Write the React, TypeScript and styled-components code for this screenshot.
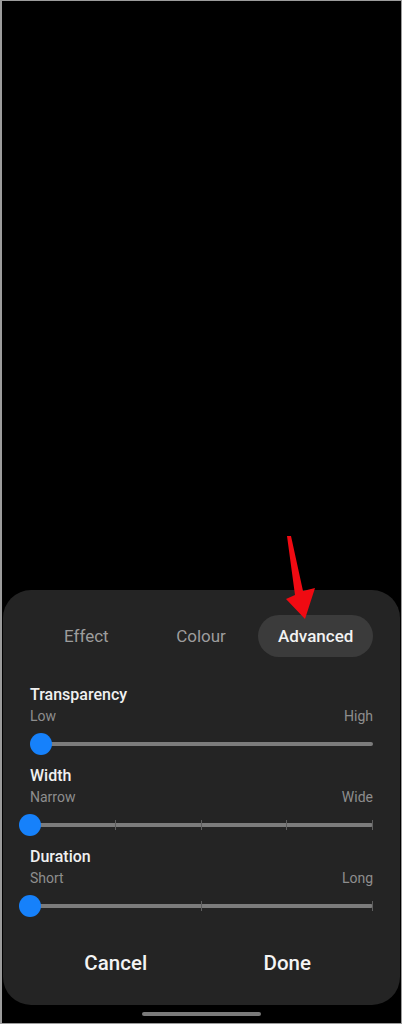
import styled, { createGlobalStyle } from "styled-components";

const GlobalStyle = createGlobalStyle`
  html, body {
    margin: 0;
    padding: 0;
    background: #000;
  }
  * {
    box-sizing: border-box;
  }
`;

const Screen = styled.div`
  position: relative;
  width: 402px;
  height: 1024px;
  background: #000;
  border: 1px solid #9c9c9c;
  border-left-width: 2px;
  display: flex;
  flex-direction: column;
  font-family: Roboto, "Noto Sans", sans-serif;
  overflow: hidden;
`;

const Backdrop = styled.div`
  flex: 1;
`;

const Sheet = styled.div`
  margin: 0 1px 0 1px;
  height: 415px;
  background: #242424;
  border-radius: 28px;
  padding: 25px 27px 18px 27px;
  display: flex;
  flex-direction: column;
`;

const Tabs = styled.div`
  display: grid;
  grid-template-columns: repeat(3, 1fr);
  height: 42px;
  margin-left: -1px;
`;

const Tab = styled.div<{ $active?: boolean }>`
  display: flex;
  align-items: center;
  justify-content: center;
  border-radius: 21px;
  font-size: 17px;
  font-weight: ${(p) => (p.$active ? 500 : 400)};
  color: ${(p) => (p.$active ? "#f2f2f2" : "#9d9d9d")};
  background: ${(p) => (p.$active ? "#3b3b3b" : "transparent")};
`;

const Setting = styled.div<{ $top: number }>`
  margin-top: ${(p) => p.$top}px;
  display: flex;
  flex-direction: column;
`;

const Title = styled.div`
  font-size: 16px;
  line-height: 20px;
  font-weight: 500;
  color: #f0f0f0;
`;

const Range = styled.div`
  display: flex;
  justify-content: space-between;
  margin-top: 2px;
  font-size: 14px;
  line-height: 18px;
  color: #8e8e8e;
`;

const SliderBox = styled.div`
  position: relative;
  height: 22px;
  margin-top: 8px;
`;

const Track = styled.div<{ $inset: number }>`
  position: absolute;
  left: ${(p) => p.$inset}px;
  right: 0;
  top: 9px;
  height: 4px;
  border-radius: 2px;
  background: #7c7c7c;
`;

const Tick = styled.div`
  position: absolute;
  top: 6px;
  width: 1px;
  height: 10px;
  margin-left: -1px;
  background: #5e5e5e;
`;

const Thumb = styled.div<{ $inset: number }>`
  position: absolute;
  left: ${(p) => p.$inset - 11}px;
  top: 0;
  width: 22px;
  height: 22px;
  border-radius: 50%;
  background: #1681fb;
`;

const Buttons = styled.div`
  margin-top: auto;
  display: grid;
  grid-template-columns: 1fr 1fr;
  height: 48px;
`;

const Button = styled.div`
  display: flex;
  align-items: center;
  justify-content: center;
  font-size: 20.5px;
  font-weight: 500;
  color: #f4f4f4;
`;

const HomeArea = styled.div`
  height: 18px;
  display: flex;
  justify-content: center;
  padding-top: 7px;
`;

const HomeBar = styled.div`
  width: 119px;
  height: 4px;
  border-radius: 2px;
  background: #7a7a7a;
`;

const Arrow = styled.svg`
  position: absolute;
  left: 277px;
  top: 530px;
`;

type SliderProps = { inset?: number; ticks?: number[] };

function Slider({ inset = 0, ticks = [] }: SliderProps) {
  return (
    <SliderBox>
      <Track $inset={inset} />
      {ticks.map((t) => (
        <Tick key={t} style={{ left: `${t * 100}%` }} />
      ))}
      <Thumb $inset={inset} />
    </SliderBox>
  );
}

export default function App() {
  return (
    <>
      <GlobalStyle />
      <Screen>
        <Backdrop />
        <Sheet>
          <Tabs>
            <Tab>Effect</Tab>
            <Tab>Colour</Tab>
            <Tab $active>Advanced</Tab>
          </Tabs>

          <Setting $top={28}>
            <Title>Transparency</Title>
            <Range>
              <span>Low</span>
              <span>High</span>
            </Range>
            <Slider inset={11} />
          </Setting>

          <Setting $top={11}>
            <Title>Width</Title>
            <Range>
              <span>Narrow</span>
              <span>Wide</span>
            </Range>
            <Slider ticks={[0.25, 0.5, 0.75, 1]} />
          </Setting>

          <Setting $top={11}>
            <Title>Duration</Title>
            <Range>
              <span>Short</span>
              <span>Long</span>
            </Range>
            <Slider ticks={[0.5, 1]} />
          </Setting>

          <Buttons>
            <Button>Cancel</Button>
            <Button>Done</Button>
          </Buttons>
        </Sheet>
        <HomeArea>
          <HomeBar />
        </HomeArea>
        <Arrow width="42" height="92" viewBox="0 0 42 92">
          <polygon
            points="8,5 12,5 24,60 36,57 26,88 7,68 16,64"
            fill="#f00a12"
          />
        </Arrow>
      </Screen>
    </>
  );
}
